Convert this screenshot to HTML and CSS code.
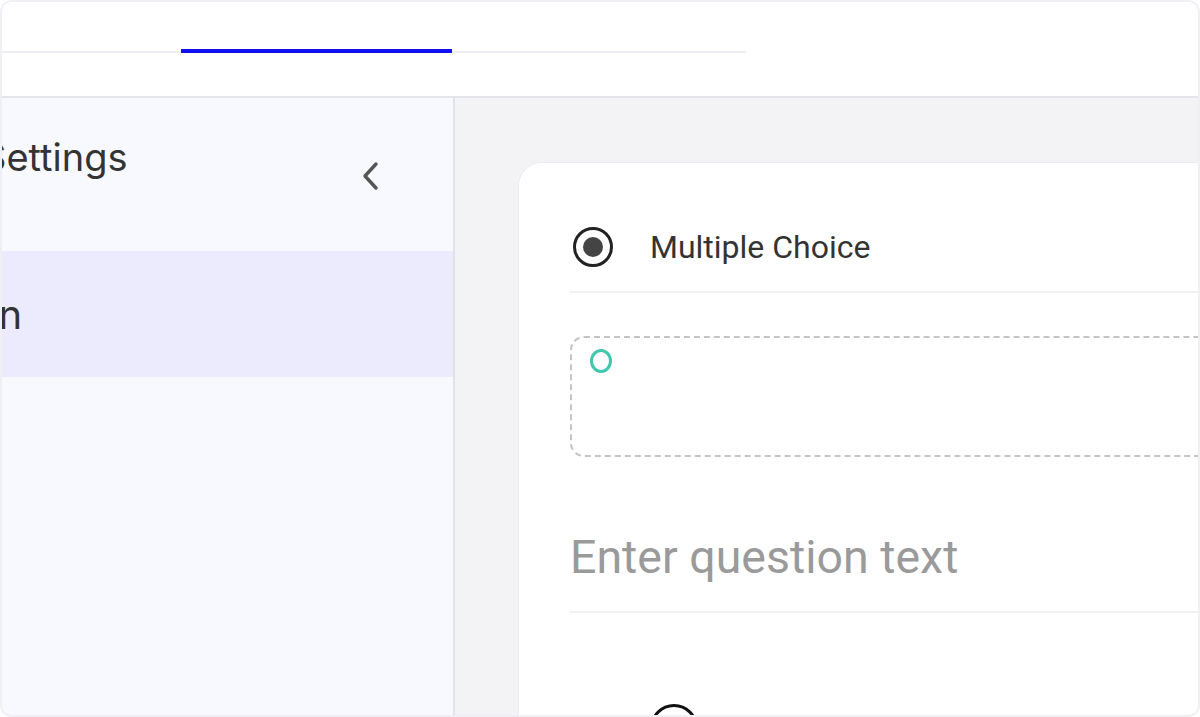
FILE: index.html
```html
<!DOCTYPE html>
<html lang="en">
<head>
  <meta charset="UTF-8" />
  <meta name="viewport" content="width=device-width, initial-scale=1.0"/>
  <title>Question Editor</title>
  <link rel="stylesheet" href="styles.css">
</head>
<body>

  <div class="frame">

    <!-- tab bar -->
    <header class="topbar">
      <div class="tabs">
        <span class="tab"></span>
        <span class="tab active"></span>
        <span class="tab"></span>
      </div>
    </header>

    <div class="workspace">

      <!-- sidebar -->
      <aside class="sidebar">
        <div class="side-head">
          <h2 class="side-title">Settings</h2>
          <button class="collapse" aria-label="Collapse">
            <svg width="24" height="34" viewBox="0 0 24 34">
              <path d="M17 5 L6 17 L17 29" fill="none" stroke="#555" stroke-width="3.4" stroke-linecap="round" stroke-linejoin="round"/>
            </svg>
          </button>
        </div>
        <div class="side-item active"><span class="side-label">Question</span></div>
      </aside>

      <!-- editor canvas -->
      <main class="canvas">
        <section class="card">
          <div class="type-row">
            <svg class="radio" width="44" height="44" viewBox="0 0 44 44">
              <circle cx="22" cy="22" r="18.5" fill="none" stroke="#222" stroke-width="3"/>
              <circle cx="22" cy="22" r="10" fill="#444"/>
            </svg>
            <span class="type-label">Multiple Choice</span>
          </div>

          <div class="media-drop">
            <span class="drop-dot"></span>
          </div>

          <div class="question">Enter question text</div>

          <div class="option">
            <span class="option-radio"></span>
          </div>
        </section>
      </main>

    </div>
  </div>

</body>
</html>
```

FILE: styles.css
```css
body {
  margin: 0;
  padding: 0;
  background: #fff;
  font-family: 'Liberation Sans', Arial, sans-serif;
}

.frame {
  box-sizing: border-box;
  width: 1200px;
  height: 717px;
  border: 2px solid #efeff4;
  border-radius: 12px;
  overflow: hidden;
  display: flex;
  flex-direction: column;
}

.topbar {
  height: 94px;
  flex-shrink: 0;
  background: #fff;
  border-bottom: 2px solid #e4e4ea;
}

.tabs {
  display: grid;
  grid-template-columns: 179px 271px 294px;
  align-items: end;
  margin-top: 47px;
  height: 4px;
}

.tab {
  height: 2px;
  background: #efeff3;
}

.tab.active {
  height: 4px;
  background: #1010f0;
}

.workspace {
  flex: 1;
  display: flex;
  min-height: 0;
}

.sidebar {
  width: 451px;
  flex-shrink: 0;
  background: #f8f9fe;
  border-right: 2px solid #e2e2e8;
  overflow: hidden;
}

.side-head {
  height: 153px;
  display: flex;
  align-items: flex-start;
  justify-content: space-between;
  padding-right: 70px;
}

.side-title {
  margin: 36px 0 0 -20px;
  font-family: 'Inter', sans-serif;
  font-size: 38px;
  font-weight: 400;
  line-height: normal;
  color: #333;
}

.collapse {
  margin-top: 61px;
  padding: 0;
  border: none;
  background: none;
  line-height: 0;
}

.side-item {
  height: 126px;
  display: flex;
  align-items: center;
}

.side-item.active {
  background: #ecebfd;
}

.side-label {
  margin-left: -149px;
  font-family: 'Inter', sans-serif;
  font-size: 40px;
  color: #333;
}

.canvas {
  flex: 1;
  background: #f3f3f5;
  padding: 64px 0 0 63px;
  overflow: hidden;
}

.card {
  box-sizing: border-box;
  width: 900px;
  height: 700px;
  background: #fff;
  border: 1px solid #ececf1;
  border-radius: 24px;
  padding: 0 0 0 51px;
}

.type-row {
  box-sizing: border-box;
  height: 130px;
  padding-top: 39px;
  display: flex;
  align-items: center;
  gap: 35px;
  border-bottom: 2px solid #f1f1f3;
}

.radio {
  margin-left: 1px;
}

.type-label {
  font-family: 'Roboto', sans-serif;
  font-size: 32px;
  color: #333;
}

.media-drop {
  box-sizing: border-box;
  margin-top: 43px;
  height: 121px;
  border: 2px dashed #c4c4c4;
  border-right: none;
  border-radius: 14px 0 0 14px;
  padding: 11px 0 0 18px;
}

.drop-dot {
  display: block;
  width: 16px;
  height: 18px;
  border: 3px solid #3fc8ad;
  border-radius: 50%;
}

.question {
  box-sizing: border-box;
  height: 156px;
  padding-top: 73px;
  font-family: 'Roboto', sans-serif;
  font-size: 46.5px;
  line-height: normal;
  color: #9a9a9a;
  border-bottom: 2px solid #f1f1f3;
}

.option {
  padding: 91px 0 0 80px;
}

.option-radio {
  display: block;
  width: 42px;
  height: 42px;
  border: 3px solid #111;
  border-radius: 50%;
}
```
